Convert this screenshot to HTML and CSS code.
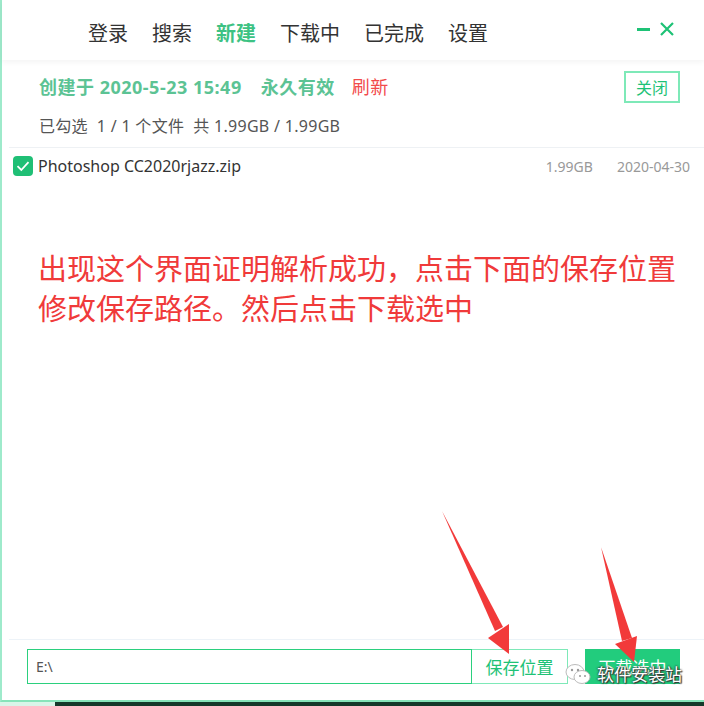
FILE: index.html
```html
<!DOCTYPE html>
<html lang="zh-CN">
<head>
  <meta charset="UTF-8">
  <title>新建</title>
  <link rel="stylesheet" href="styles.css">
</head>
<body>

  <div class="window">
    <div class="header">
      <ul class="nav">
        <li>登录</li>
        <li>搜索</li>
        <li class="active">新建</li>
        <li>下载中</li>
        <li>已完成</li>
        <li>设置</li>
      </ul>
      <div class="win-controls">
        <span class="min"></span>
        <svg class="close" width="14" height="14" viewBox="0 0 14 14">
          <path d="M1 1 L13 13 M13 1 L1 13" stroke="#1ec276" stroke-width="2.2" fill="none"/>
        </svg>
      </div>
    </div>

    <div class="info">
      <div class="info-top">
        <div class="created">创建于 2020-5-23 15:49<span class="forever">永久有效</span><span class="refresh">刷新</span></div>
        <button class="btn-close">关闭</button>
      </div>
      <div class="summary">已勾选&nbsp; 1 / 1 个文件&nbsp; 共 1.99GB / 1.99GB</div>
    </div>

    <div class="file-list">
      <div class="file-row">
        <span class="check">
          <svg width="20" height="20" viewBox="0 0 20 20">
            <path d="M4.5 10.2 L8.3 14 L15.5 6.2" stroke="#fff" stroke-width="1.8" fill="none"/>
          </svg>
        </span>
        <span class="file-name">Photoshop CC2020rjazz.zip</span>
        <span class="file-size">1.99GB</span>
        <span class="file-date">2020-04-30</span>
      </div>
    </div>

    <!-- annotation text from the tutorial -->
    <div class="note">
      出现这个界面证明解析成功，点击下面的保存位置<br>
      修改保存路径。然后点击下载选中
    </div>

    <div class="footer">
      <div class="path-box">E:\</div>
      <button class="btn-save">保存位置</button>
      <button class="btn-download">下载选中</button>
    </div>
  </div>
  <div class="taskbar"></div>

  <svg class="arrows" width="704" height="706" viewBox="0 0 704 706">
    <polygon points="442,511 495,631 503,627" fill="#f23a3a"/>
    <polygon points="488,638 509,624 509,654" fill="#f23a3a"/>
    <polygon points="601,547 622,641 632,638" fill="#f23a3a"/>
    <polygon points="615,644 637,636 634,662" fill="#f23a3a"/>
  </svg>

  <div class="watermark">
    <svg width="28" height="24" viewBox="0 0 28 24">
      <ellipse cx="11" cy="10" rx="9" ry="7.5" fill="#fff" stroke="#bbb" stroke-width="1"/>
      <ellipse cx="18" cy="15" rx="8" ry="6.5" fill="#fff" stroke="#bbb" stroke-width="1"/>
      <circle cx="8" cy="8" r="1.2" fill="#999"/>
      <circle cx="14" cy="8" r="1.2" fill="#999"/>
      <circle cx="16" cy="14" r="1" fill="#999"/>
      <circle cx="21" cy="14" r="1" fill="#999"/>
    </svg>
    <span>软件安装站</span>
  </div>

</body>
</html>
```

FILE: styles.css
```css
body {
  margin: 0;
  width: 704px;
  height: 706px;
  overflow: hidden;
  background-color: #fff;
  font-family: "Noto Sans", "Noto Sans CJK SC", sans-serif;
  position: relative;
}

.window {
  height: 700px;
  border-left: 2px solid #9eeacb;
  border-bottom: 2px solid #86e3b9;
  display: flex;
  flex-direction: column;
}

.header {
  height: 60px;
  display: flex;
  align-items: center;
  box-shadow: 0 2px 6px rgba(0, 0, 0, 0.05);
}

.nav {
  list-style: none;
  margin: 0;
  padding: 0 0 0 86px;
  display: flex;
  gap: 24px;
  font-size: 20px;
  color: #333;
  font-family: "Noto Sans CJK SC", sans-serif;
}

.nav li {
  line-height: 24px;
  margin-top: 6px;
}

.nav .active {
  color: #3dc283;
  font-weight: bold;
}

.win-controls {
  margin-left: auto;
  margin-right: 30px;
  display: flex;
  align-items: center;
  gap: 10px;
  margin-top: -2px;
}

.win-controls .min {
  width: 13px;
  height: 3px;
  background-color: #1ec276;
  margin-top: 1px;
}

.info {
  padding: 0 24px 0 37px;
}

.info-top {
  display: flex;
  align-items: center;
  justify-content: space-between;
  margin-top: 9px;
}

.created {
  font-size: 18px;
  font-weight: bold;
  color: #5cc394;
  letter-spacing: 0.5px;
}

.created .forever {
  margin-left: 19px;
}

.created .refresh {
  margin-left: 17px;
  color: #f24b4b;
  font-weight: normal;
  font-family: "Noto Sans CJK SC", sans-serif;
}

.btn-close {
  width: 56px;
  height: 32px;
  background: #fff;
  border: 2px solid #7ee9b8;
  color: #1ec276;
  font-size: 16px;
  font-family: "Noto Sans CJK SC", sans-serif;
  padding: 0;
  margin-top: 2px;
}

.summary {
  margin-top: 11px;
  font-size: 16px;
  color: #555;
  height: 25px;
  line-height: 25px;
  letter-spacing: 0.3px;
}

.file-list {
  margin-left: 7px;
  border-top: 1px solid #eef1f4;
  margin-top: 8px;
}

.file-row {
  display: flex;
  align-items: center;
  height: 36px;
  padding: 0 14px 0 4px;
}

.check {
  width: 20px;
  height: 20px;
  border-radius: 4px;
  background-color: #1fbf75;
  display: flex;
}

.file-name {
  margin-left: 5px;
  font-size: 16px;
  color: #333;
}

.file-size {
  margin-left: auto;
  font-size: 14px;
  color: #999;
}

.file-date {
  margin-left: 24px;
  font-size: 14px;
  color: #999;
}

.note {
  margin: 63px 0 0 36px;
  font-size: 29px;
  line-height: 40px;
  color: #f03a3a;
  font-family: "Noto Sans CJK SC", sans-serif;
}

.footer {
  margin-top: auto;
  margin-left: 7px;
  border-top: 1px solid #edf3f8;
  height: 61px;
  display: flex;
  align-items: flex-start;
  padding: 9px 22px 0 18px;
  box-sizing: border-box;
}

.path-box {
  width: 435px;
  height: 33px;
  border: 1px solid #2bd07e;
  line-height: 33px;
  padding-left: 8px;
  font-size: 14px;
  color: #555;
}

.btn-save {
  width: 96px;
  height: 35px;
  background: #fff;
  border: 1px solid #7ee9b8;
  border-left: none;
  color: #1ec276;
  font-size: 17px;
  font-family: "Noto Sans CJK SC", sans-serif;
  padding: 0;
}

.btn-download {
  margin-left: auto;
  margin-right: 2px;
  width: 95px;
  height: 35px;
  background-color: #22cc7d;
  border: none;
  color: #fff;
  font-size: 17px;
  font-family: "Noto Sans CJK SC", sans-serif;
  padding: 0;
}

.taskbar {
  height: 4px;
  background: linear-gradient(to right, #d8f5e8 0, #d8f5e8 55px, #15382a 55px);
}

.arrows {
  position: absolute;
  top: 0;
  left: 0;
  pointer-events: none;
}

.watermark {
  position: absolute;
  left: 564px;
  top: 661px;
  display: flex;
  align-items: center;
  gap: 5px;
}

.watermark span {
  font-size: 17px;
  color: #fff;
  font-family: "Noto Sans CJK SC", sans-serif;
  text-shadow: 0 0 2px #333, 0 0 2px #333, 1px 1px 1px #333;
}
```
